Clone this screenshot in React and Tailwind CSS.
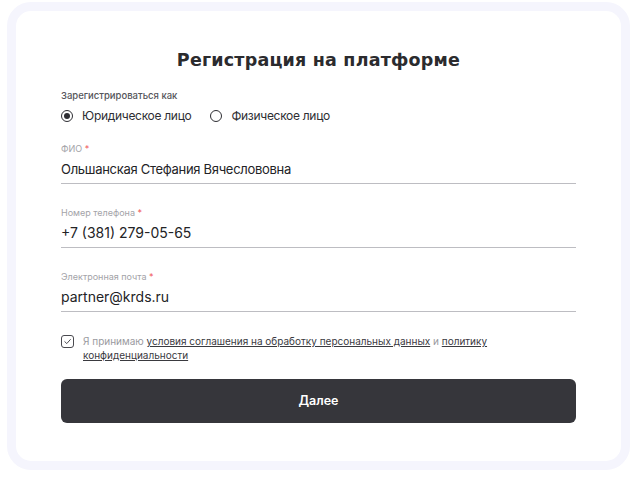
import React, { useState } from 'react';

const Field = ({ label, value, tight }) => (
    <div className="flex flex-col">
        <span className="text-[9px] leading-[12px] text-[#a3a3a8]">
            {label} <span className="text-[#f0575a]">*</span>
        </span>
        <span className={`mt-[5px] leading-[18px] text-[#232326] ${tight ? 'text-[13px] tracking-[-0.3px]' : 'text-[14px]'}`}>{value}</span>
        <div className="mt-[5px] h-px bg-[#bdbdc2]" />
    </div>
);

const Radio = ({ checked, label, onClick }) => (
    <button type="button" onClick={onClick} className="flex items-center gap-[9px]">
        <span className="w-[12px] h-[12px] rounded-full border border-[#2e2e33] flex items-center justify-center">
            {checked && <span className="w-[6px] h-[6px] rounded-full bg-[#2e2e33]" />}
        </span>
        <span className="text-[12px] leading-[16px] tracking-[-0.3px] text-[#2e2e33]">{label}</span>
    </button>
);

export default function App() {
    const [type, setType] = useState('legal');

    return (
        <div className="w-[636px] h-[479px] bg-white pt-[2px] pl-[7px]" style={{ fontFamily: 'Inter, "Noto Sans", sans-serif' }}>
            <div className="w-[623px] h-[468px] rounded-[24px] border-[9px] border-[#f5f5fd] bg-white px-[45px] pt-[38px]">
                {/* Header */}
                <h1
                    className="text-center text-[17.5px] leading-[22px] font-bold text-[#2b2b2e] tracking-[0.2px]"
                    style={{ fontFamily: '"DejaVu Sans", sans-serif' }}
                >
                    Регистрация на платформе
                </h1>

                {/* Account type */}
                <div className="mt-[18px] text-[9.5px] leading-[14px] font-medium text-[#55555a]">Зарегистрироваться как</div>
                <div className="mt-[5px] flex items-center gap-[19px]">
                    <Radio checked={type === 'legal'} label="Юридическое лицо" onClick={() => setType('legal')} />
                    <Radio checked={type === 'person'} label="Физическое лицо" onClick={() => setType('person')} />
                </div>

                <div className="mt-[19px] flex flex-col gap-[23px]">
                    <Field label="ФИО" value="Ольшанская Стефания Вячеслововна" tight />
                    <Field label="Номер телефона" value="+7 (381) 279-05-65" />
                    <Field label="Электронная почта" value="partner@krds.ru" />
                </div>

                {/* Consent */}
                <div className="mt-[22px] flex items-start gap-[9px]">
                    <span className="mt-[1px] w-[13px] h-[13px] shrink-0 rounded-[3px] border border-[#4a4a50] flex items-center justify-center">
                        <svg width="9" height="9" viewBox="0 0 10 10" fill="none">
                            <path d="M2 5.2L4.2 7.3L8.2 2.8" stroke="#4a4a50" strokeWidth="1.1" strokeLinecap="round" strokeLinejoin="round" />
                        </svg>
                    </span>
                    <div className="flex flex-col text-[10px] leading-[14px] text-[#9a9aa0]">
                        <p>
                            Я принимаю{' '}
                            <a className="underline text-[#3a3a3f]">условия соглашения на обработку персональных данных</a>
                            {' '}и{' '}
                            <a className="underline text-[#3a3a3f]">политику</a>
                        </p>
                        <p>
                            <a className="underline text-[#3a3a3f]">конфиденциальности</a>
                        </p>
                    </div>
                </div>

                {/* Submit */}
                <button
                    type="button"
                    className="mt-[17px] w-full h-[44px] rounded-[6px] bg-[#36363b] text-white text-[12.5px] font-semibold flex items-center justify-center"
                >
                    Далее
                </button>
            </div>
        </div>
    );
}
